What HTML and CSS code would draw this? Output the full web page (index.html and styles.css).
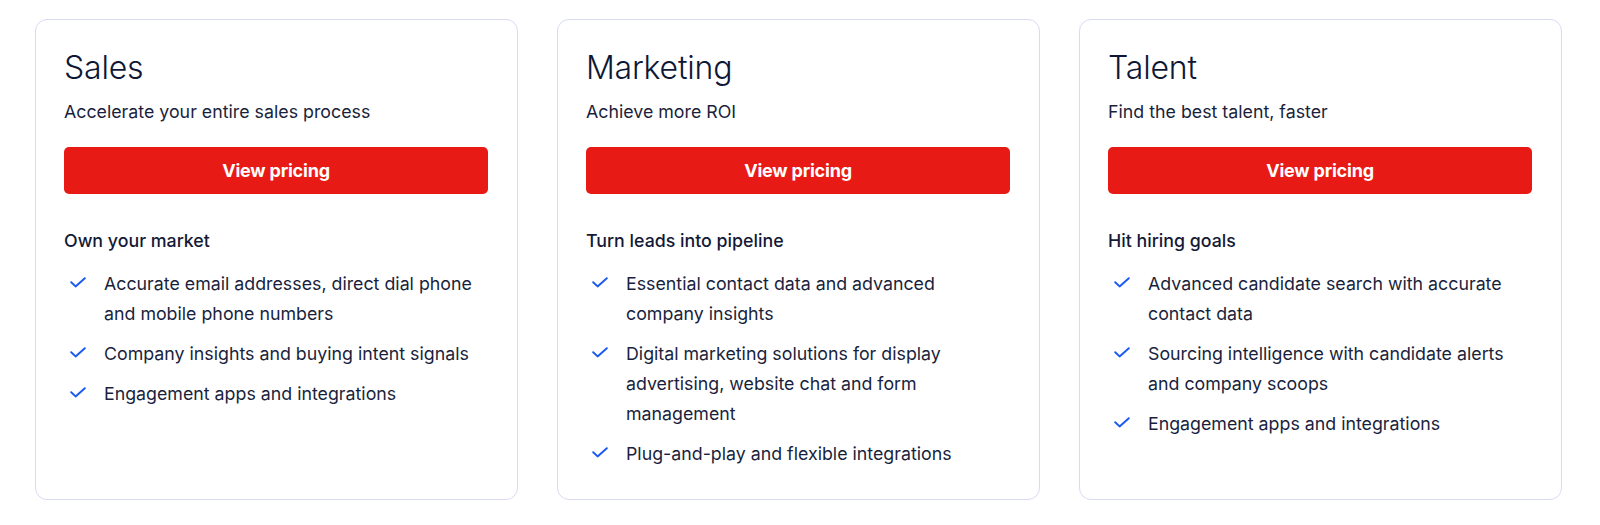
FILE: index.html
```html
<!DOCTYPE html>
<html lang="en">
<head>
<meta charset="utf-8">
<title>Pricing</title>
<link rel="stylesheet" href="styles.css">
</head>
<body>
<main class="plans">
  <section class="card">
    <h2 class="title">Sales</h2>
    <p class="subtitle">Accelerate your entire sales process</p>
    <a class="btn" href="#">View pricing</a>
    <h3 class="heading">Own your market</h3>
    <ul class="features">
      <li><svg class="check" viewBox="0 0 16 11"><path d="M1.2 5.2 5.6 9.4 14.8 1.2"/></svg><span>Accurate email addresses, direct dial phone and mobile phone numbers</span></li>
      <li><svg class="check" viewBox="0 0 16 11"><path d="M1.2 5.2 5.6 9.4 14.8 1.2"/></svg><span>Company insights and buying intent signals</span></li>
      <li><svg class="check" viewBox="0 0 16 11"><path d="M1.2 5.2 5.6 9.4 14.8 1.2"/></svg><span>Engagement apps and integrations</span></li>
    </ul>
  </section>
  <section class="card">
    <h2 class="title">Marketing</h2>
    <p class="subtitle">Achieve more ROI</p>
    <a class="btn" href="#">View pricing</a>
    <h3 class="heading">Turn leads into pipeline</h3>
    <ul class="features">
      <li><svg class="check" viewBox="0 0 16 11"><path d="M1.2 5.2 5.6 9.4 14.8 1.2"/></svg><span>Essential contact data and advanced company insights</span></li>
      <li><svg class="check" viewBox="0 0 16 11"><path d="M1.2 5.2 5.6 9.4 14.8 1.2"/></svg><span>Digital marketing solutions for display advertising, website chat and form management</span></li>
      <li><svg class="check" viewBox="0 0 16 11"><path d="M1.2 5.2 5.6 9.4 14.8 1.2"/></svg><span>Plug-and-play and flexible integrations</span></li>
    </ul>
  </section>
  <section class="card">
    <h2 class="title">Talent</h2>
    <p class="subtitle">Find the best talent, faster</p>
    <a class="btn" href="#">View pricing</a>
    <h3 class="heading">Hit hiring goals</h3>
    <ul class="features">
      <li><svg class="check" viewBox="0 0 16 11"><path d="M1.2 5.2 5.6 9.4 14.8 1.2"/></svg><span>Advanced candidate search with accurate contact data</span></li>
      <li><svg class="check" viewBox="0 0 16 11"><path d="M1.2 5.2 5.6 9.4 14.8 1.2"/></svg><span>Sourcing intelligence with candidate alerts and company scoops</span></li>
      <li><svg class="check" viewBox="0 0 16 11"><path d="M1.2 5.2 5.6 9.4 14.8 1.2"/></svg><span>Engagement apps and integrations</span></li>
    </ul>
  </section>
</main>
</body>
</html>
```
FILE: styles.css
```css
* { box-sizing: border-box; }

html, body {
  margin: 0;
  padding: 0;
  background: #ffffff;
}

body {
  font-family: "Inter", "Noto Sans", sans-serif;
  color: #111634;
}

.plans {
  display: grid;
  grid-template-columns: repeat(3, 483px);
  column-gap: 39px;
  padding: 19px 0 0 35px;
  align-items: stretch;
}

.card {
  min-height: 479px;
  border: 1px solid #d9dbf3;
  border-radius: 12px;
  padding: 28px 29px 20px 28px;
  display: flex;
  flex-direction: column;
}

.card > * { flex-shrink: 0; }

.title {
  margin: 0;
  font-size: 32px;
  line-height: 40px;
  font-weight: 300;
  color: #0e1736;
  letter-spacing: -0.2px;
}

.subtitle {
  margin: 11px 0 0;
  font-size: 17.8px;
  line-height: 26px;
  font-weight: 400;
  color: #1a1f3d;
}

.btn {
  display: flex;
  align-items: center;
  justify-content: center;
  margin-top: 22px;
  height: 47px;
  border-radius: 5px;
  background: #e81a16;
  color: #ffffff;
  font-size: 18px;
  font-weight: 700;
  text-decoration: none;
  letter-spacing: -0.2px;
}

.heading {
  margin: 34px 0 0;
  font-size: 17.8px;
  line-height: 26px;
  font-weight: 500;
  color: #141936;
}

.features {
  list-style: none;
  margin: 15px 0 0;
  padding: 0;
}

.features li {
  display: flex;
  align-items: flex-start;
  font-size: 17.8px;
  line-height: 30px;
  color: #1a1f3d;
  margin-bottom: 10px;
}

.check {
  flex: none;
  width: 16px;
  height: 11px;
  margin: 8px 18px 0 6px;
  fill: none;
  stroke: #1d5bf0;
  stroke-width: 2;
  stroke-linecap: round;
  stroke-linejoin: round;
}
```
